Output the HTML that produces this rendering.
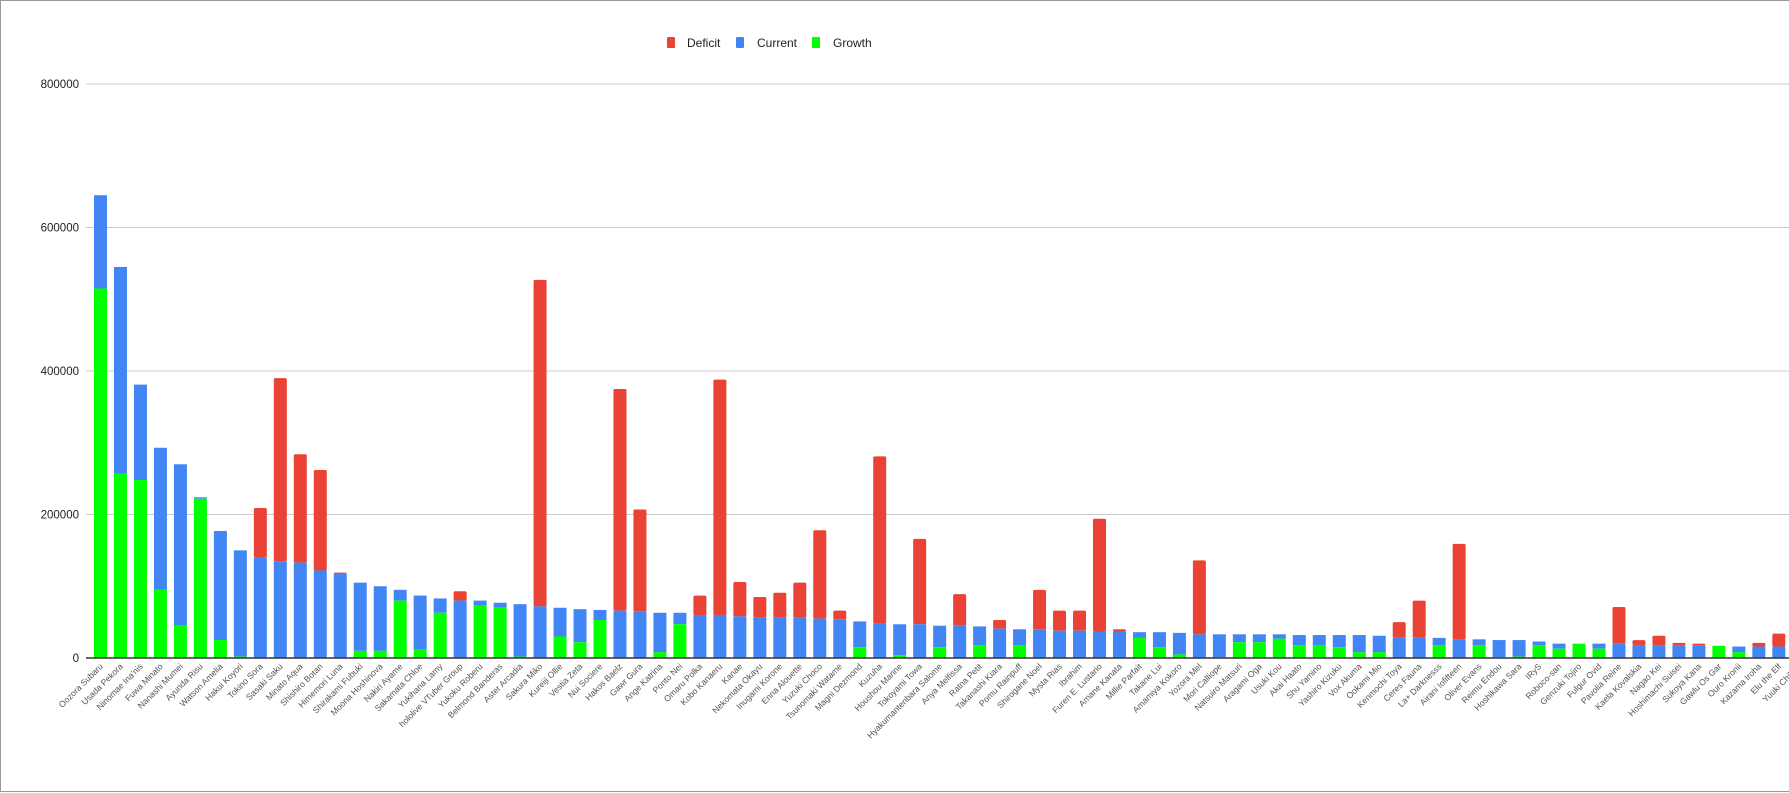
<!DOCTYPE html>
<html><head><meta charset="utf-8">
<style>
html,body{margin:0;padding:0;background:#fff;}
body{width:1789px;height:793px;overflow:hidden;position:relative;font-family:"Liberation Sans",Arial,sans-serif;}
#frame{position:absolute;left:0;top:0;width:1789px;height:792px;border-top:1px solid #9a9a9a;border-left:1px solid #9a9a9a;border-bottom:1px solid #9a9a9a;box-sizing:border-box;}
svg{position:absolute;left:0;top:0;}
</style></head><body>
<div id="frame"></div>
<svg id="c" width="1789" height="793" xmlns="http://www.w3.org/2000/svg" font-family="Liberation Sans, Arial, sans-serif"></svg>
<script>
var D=[
["Oozora Subaru",515,645,0],["Usada Pekora",257,545,0],["Ninomae Ina'nis",248,381,0],["Fuwa Minato",95,293,0],
["Nanashi Mumei",45,270,0],["Ayunda Risu",222,224,0],["Watson Amelia",25,177,0],["Hakui Koyori",2,150,0],
["Tokino Sora",0,140,209],["Sasaki Saku",0,135,390],["Minato Aqua",0,133,284],["Shishiro Botan",0,122,262],
["Himemori Luna",0,117,119],["Shirakami Fubuki",10,105,0],["Moona Hoshinova",10,100,0],["Nakiri Ayame",80,95,0],
["Sakamata Chloe",12,87,0],["Yukihana Lamy",63,83,0],["hololive VTuber Group",0,80,93],["Yukoku Roberu",73,80,0],
["Belmond Banderas",70,77,0],["Aster Arcadia",2,75,0],["Sakura Miko",0,72,527],["Kureiji Ollie",30,70,0],
["Vestia Zeta",22,68,0],["Nui Sociere",53,67,0],["Hakos Baelz",0,66,375],["Gawr Gura",0,65,207],
["Ange Katrina",8,63,0],["Ponto Nei",47,63,0],["Omaru Polka",0,60,87],["Kobo Kanaeru",0,60,388],
["Kanae",0,58,106],["Nekomata Okayu",0,57,85],["Inugami Korone",0,57,91],["Enna Alouette",0,56,105],
["Yuzuki Choco",0,55,178],["Tsunomaki Watame",0,54,66],["Magni Dezmond",15,51,0],["Kuzuha",0,48,281],
["Houshou Marine",4,47,0],["Tokoyami Towa",0,47,166],["Hyakumantenbara Salome",15,45,0],["Anya Melfissa",0,45,89],
["Ratna Petit",18,44,0],["Takanashi Kiara",0,41,53],["Pomu Rainpuff",18,40,0],["Shirogane Noel",0,40,95],
["Mysta Rias",0,38,66],["Ibrahim",0,38,66],["Furen E. Lustario",0,37,194],["Amane Kanata",0,37,40],
["Millie Parfait",28,36,0],["Takane Lui",15,36,0],["Amamiya Kokoro",5,35,0],["Yozora Mel",0,33,136],
["Mori Calliope",1,33,0],["Natsuiro Matsuri",22,33,0],["Aragami Oga",22,33,0],["Usuki Kou",27,33,0],
["Akai Haato",18,32,0],["Shu Yamino",18,32,0],["Yashiro Kizuku",15,32,0],["Vox Akuma",8,32,0],
["Ookami Mio",8,31,0],["Kenmochi Toya",0,28,50],["Ceres Fauna",0,28,80],["La+ Darknesss",18,28,0],
["Airani Iofifteen",0,26,159],["Oliver Evans",18,26,0],["Reimu Endou",1,25,0],["Hoshikawa Sara",2,25,0],
["IRyS",18,23,0],["Roboco-san",13,20,0],["Genzuki Tojiro",20,20,0],["Fulgur Ovid",13,20,0],
["Pavolia Reine",0,20,71],["Kaela Kovalskia",0,18,25],["Nagao Kei",0,18,31],["Hoshimachi Suisei",0,18,21],
["Sukoya Kana",0,17,20],["Gawlu Os Gar",17,17,0],["Ouro Kronii",8,16,0],["Kazama Iroha",0,16,21],
["Elu the Elf",0,16,34],["Yuuki Chihiro",0,0,0]
];
var B=658,K=0.7175,s='';
function y(v){return B-v*K;}
[200,400,600,800].forEach(function(v){s+='<line x1="86" x2="1789" y1="'+y(v)+'" y2="'+y(v)+'" stroke="#cccccc" stroke-width="1"/>';
s+='<text x="79" y="'+(y(v)+4)+'" font-size="11.5" fill="#222" text-anchor="end">'+(v*1000)+'</text>';});
s+='<text x="79" y="'+(B+4)+'" font-size="11.5" fill="#222" text-anchor="end">0</text>';
D.forEach(function(d,i){
 var x=94+i*19.98,w=13;
 if(i<85){
 if(d[3]>d[2]) s+='<rect x="'+x+'" y="'+y(d[3])+'" width="'+w+'" height="'+(y(d[2])-y(d[3]))+'" fill="#ea4335" rx="1.5"/>';
 if(d[2]>d[1]) s+='<rect x="'+x+'" y="'+y(d[2])+'" width="'+w+'" height="'+(y(d[1])-y(d[2]))+'" fill="#4285f4"/>';
 if(d[1]>0) s+='<rect x="'+x+'" y="'+y(d[1])+'" width="'+w+'" height="'+(B-y(d[1]))+'" fill="#00ff00"/>';
 }
 var cx=x+w/2+3;
 s+='<text transform="translate('+cx+','+(B+9)+') rotate(-45)" font-size="8.6" fill="#555" text-anchor="end">'+d[0]+'</text>';
});
s+='<line x1="86" x2="1789" y1="'+B+'" y2="'+B+'" stroke="#333" stroke-width="1.5"/>';
s+='<rect x="667" y="37" width="8" height="11" rx="1" fill="#ea4335"/><text x="687" y="47" font-size="12" fill="#222">Deficit</text>';
s+='<rect x="736" y="37" width="8" height="11" rx="1" fill="#4285f4"/><text x="757" y="47" font-size="12" fill="#222">Current</text>';
s+='<rect x="812" y="37" width="8" height="11" rx="1" fill="#00ff00"/><text x="833" y="47" font-size="12" fill="#222">Growth</text>';
document.getElementById('c').innerHTML=s;
</script>
</body></html>
